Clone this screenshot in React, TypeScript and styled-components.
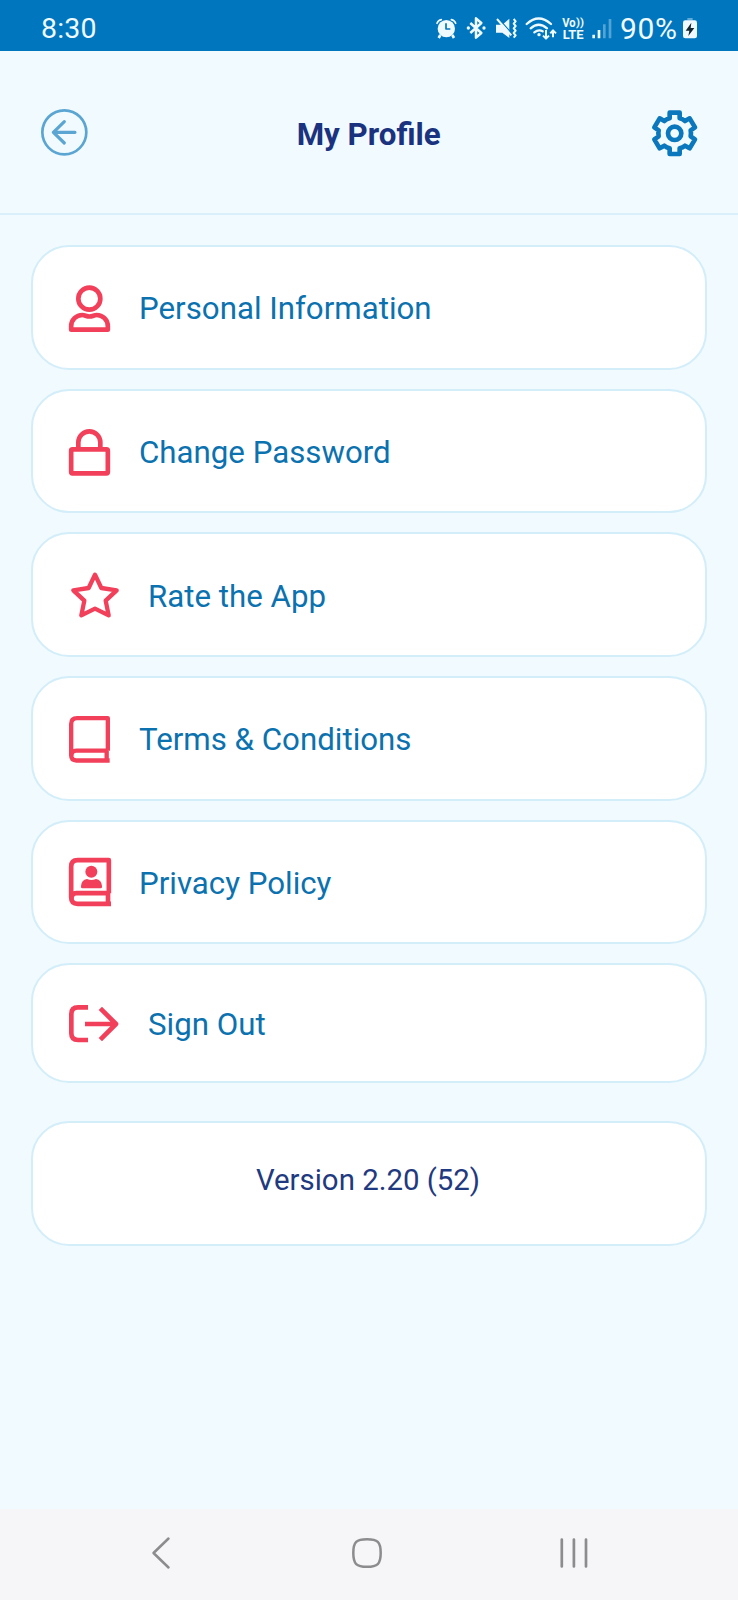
import React from "react";
import styled, { createGlobalStyle } from "styled-components";

const GlobalStyle = createGlobalStyle`
  * { box-sizing: border-box; }
  body { margin: 0; background: #f0faff; font-family: Roboto, "Liberation Sans", sans-serif; }
  svg { display: block; flex: none; overflow: visible; }
`;

const Screen = styled.div`
  width: 738px;
  height: 1600px;
  display: flex;
  flex-direction: column;
  background: #f0faff;
`;

const StatusBar = styled.div`
  height: 51px;
  flex: none;
  display: flex;
  align-items: center;
  justify-content: space-between;
  padding: 5px 41px 0 41px;
  background: #0076be;
  color: #effaff;
`;

const StatusText = styled.span`
  padding-top: 2px;
  font-size: 28.5px;
  line-height: 32px;
  letter-spacing: 0.2px;
`;

const StatusIcons = styled.div`
  display: flex;
  align-items: center;
  width: 263px;
`;

const BatteryLevel = styled(StatusText)`
  width: 67px;
  padding-left: 4px;
  font-size: 30px;
  letter-spacing: 0.6px;
`;

const Header = styled.header`
  height: 164px;
  flex: none;
  display: flex;
  align-items: center;
  justify-content: space-between;
  padding: 2px 41px 0 41px;
  border-bottom: 2px solid #d9eff9;
`;

const Title = styled.h1`
  margin: 0;
  padding: 3px 2px 0 0;
  font-size: 31.3px;
  line-height: 40px;
  font-weight: 700;
  color: #1b327f;
`;

const IconButton = styled.button`
  padding: 0;
  border: 0;
  background: none;
`;

const BackButton = styled(IconButton)`
  padding-bottom: 1px;
`;

const Content = styled.main`
  flex: 1;
  padding: 30px 31px 0;
`;

const Menu = styled.nav`
  display: flex;
  flex-direction: column;
  gap: 19.2px;
`;

const Card = styled.div<{ $height: number }>`
  height: ${(p) => p.$height}px;
  display: flex;
  align-items: center;
  border: 2px solid #d3edf9;
  border-radius: 38px;
  background: #fff;
`;

const MenuRow = styled(Card)`
  padding-left: 36px;
  color: #0b72af;
`;

const IconSlot = styled.span<{ $wide?: boolean; $drop: number }>`
  width: ${(p) => (p.$wide ? 50 : 41)}px;
  margin-right: 29px;
  padding-top: ${(p) => p.$drop}px;
  display: flex;
  justify-content: ${(p) => (p.$wide ? "flex-end" : "flex-start")};
  color: #f2405b;
`;

const Label = styled.span`
  padding-top: 4px;
  font-size: 31.25px;
  line-height: 36px;
  white-space: nowrap;
`;

const VersionCard = styled(Card)`
  margin-top: 38px;
  padding: 0 2px 7px 0;
  justify-content: center;
  color: #1f3a80;
  font-size: 29.4px;
`;

const NavBar = styled.footer`
  height: 91px;
  flex: none;
  display: flex;
  align-items: center;
  justify-content: space-between;
  padding: 0 150px 3px;
  background: #f6f6f8;
`;

type GlyphProps = { w: number; h: number; stroke?: number; children: React.ReactNode };

/* Glyphs are drawn on a grid of three units to a pixel. */
const Glyph = ({ w, h, stroke = 14, children }: GlyphProps) => (
  <svg
    width={w / 3}
    height={h / 3}
    viewBox={`0 0 ${w} ${h}`}
    fill="none"
    stroke="currentColor"
    strokeWidth={stroke}
    strokeLinejoin="round"
  >
    {children}
  </svg>
);

const PersonIcon = () => (
  <Glyph w={123} h={141}>
    <circle cx="61" cy="41" r="33" />
    <path d="M6.5 134V124C6.500 104 22 90 40 90C48 90 52 94.500 61.500 94.500C71 94.500 75 90 83 90C101 90 116.500 104 116.500 124V134Z" />
  </Glyph>
);

const LockIcon = () => (
  <Glyph w={123} h={141}>
    <rect x="6.500" y="61" width="110" height="72" rx="4" />
    <path d="M28 60V40a33 33 0 0 1 66 0V60" />
  </Glyph>
);

const StarIcon = () => (
  <Glyph w={144} h={138} stroke={13}>
    <path d="M72 8L91 48L137 55L104 86L113 130L72 110L31 130L40 86L7 55L53 48Z" />
  </Glyph>
);

const BookIcon = () => (
  <Glyph w={123} h={140} stroke={13}>
    <path d="M116.500 104V6.500H24Q6.500 6.500 6.500 24V118Q6.500 133.500 22 133.500H122" />
    <path d="M7 119Q7 104 22 104H116.500M113 104V134" />
  </Glyph>
);

const PrivacyIcon = () => (
  <Glyph w={126} h={144}>
    <path d="M119.500 105.500V6.500H26Q6.500 6.500 6.500 26V118Q6.500 137.500 26 137.500H126" />
    <path d="M7 124Q7 105.500 22 105.500H119.500M117 105V137" />
    <g fill="currentColor" stroke="none">
      <circle cx="67" cy="41" r="18" />
      <path d="M36 87V84Q37 66 54 63Q61 66 67.500 66Q74 66 81 63Q98 66 99 84V87Q99 91 95 91H40Q36 91 36 87Z" />
    </g>
  </Glyph>
);

const SignOutIcon = () => (
  <Glyph w={150} h={112}>
    <path d="M57 7H27Q7 7 7 27V85Q7 105 27 105H57M48 57H142M94 10L141 57L94 104" />
  </Glyph>
);

const BackIcon = () => (
  <Glyph w={140} h={140} stroke={8}>
    <g stroke="#5aa5d2" strokeLinecap="round">
      <circle cx="70" cy="70" r="66" />
      <path d="M102 70H37M70 38L37 70L70 102" strokeWidth="9.500" />
    </g>
  </Glyph>
);

const GearIcon = () => (
  <Glyph w={136} h={140} stroke={14}>
    <g stroke="#0b78bd">
      <path d="M53 8H83V25Q92 27 99 33L113 25L129 52L116 61Q118 70 116 79L129 88L113 115L99 107Q92 113 83 115V132H53V115Q44 113 37 107L23 115L7 88L20 79Q18 70 20 61L7 52L23 25L37 33Q44 27 53 25Z" />
      <circle cx="68" cy="70" r="20" />
    </g>
  </Glyph>
);

const AlarmIcon = () => (
  <Glyph w={78} h={72} stroke={5}>
    <circle cx="37" cy="38" r="26" fill="currentColor" stroke="none" />
    <path d="M19 57L14 66M55 57L60 66" strokeWidth="8" />
    <path d="M9 22Q12 13 22 11M52 11Q62 13 65 22" strokeLinecap="round" />
    <path d="M36 22V39H49" stroke="#0076be" />
  </Glyph>
);

const BluetoothIcon = () => (
  <Glyph w={90} h={72} stroke={7.5}>
    <path d="M31 21L64 51L48 65V7L64 21L31 51" />
    <circle cx="25" cy="36" r="5" fill="currentColor" stroke="none" />
    <circle cx="72" cy="36" r="5" fill="currentColor" stroke="none" />
  </Glyph>
);

const MuteIcon = () => (
  <Glyph w={90} h={72} stroke={6}>
    <path d="M18 26H37L58 8V66L37 50H18Z" fill="currentColor" stroke="none" />
    <path d="M26 8L66 53" stroke="#0076be" strokeWidth="4" />
    <path d="M21 9L64 58" strokeWidth="6" />
    <path d="M71 9L77 16L71 23L77 30L71 37L77 44L71 51L77 58L71 65" />
  </Glyph>
);

const WifiIcon = () => (
  <Glyph w={117} h={72} stroke={7}>
    <path d="M20 24Q56 -9 93 24M32 37Q56 16 81 37M43 49Q56 39 68 46" strokeLinecap="round" />
    <circle cx="57" cy="56" r="5" fill="currentColor" stroke="none" />
    <path d="M78 42V67M69 59L78 68L87 59M99 64V43M91 52L99 43L108 52" strokeWidth="6" />
  </Glyph>
);

const VolteIcon = () => (
  <Glyph w={87} h={72}>
    <g fill="currentColor" stroke="none" fontFamily="Roboto, sans-serif" fontWeight="700">
      <text x="10" y="34" fontSize="36" textLength="40" lengthAdjust="spacingAndGlyphs">Vo</text>
      <text x="51" y="31" fontSize="30" textLength="24" lengthAdjust="spacingAndGlyphs">))</text>
      <text x="11" y="70" fontSize="38" textLength="63" lengthAdjust="spacingAndGlyphs">LTE</text>
    </g>
  </Glyph>
);

const SignalIcon = () => (
  <Glyph w={84} h={72} stroke={8}>
    <path d="M17 56V67M33 42V67" />
    <path d="M49 25V67M66 9V67" opacity="0.35" />
  </Glyph>
);

const BatteryIcon = () => (
  <Glyph w={42} h={66}>
    <path d="M13 3H29V10H13Z" fill="currentColor" stroke="none" opacity="0.4" />
    <rect y="10" width="42" height="54" rx="7" fill="currentColor" stroke="none" />
    <path d="M25 17L8 41H19L16 57L34 33H23Z" fill="#12262f" stroke="none" />
  </Glyph>
);

const items = [
  { label: "Personal Information", icon: <PersonIcon />, drop: 3 },
  { label: "Change Password", icon: <LockIcon />, drop: 3 },
  { label: "Rate the App", icon: <StarIcon />, wide: true },
  { label: "Terms & Conditions", icon: <BookIcon />, drop: 2 },
  { label: "Privacy Policy", icon: <PrivacyIcon /> },
  { label: "Sign Out", icon: <SignOutIcon />, wide: true, height: 119.5 },
];

export default function App() {
  return (
    <Screen>
      <GlobalStyle />
      <StatusBar>
        <StatusText>8:30</StatusText>
        <StatusIcons>
          <AlarmIcon />
          <BluetoothIcon />
          <MuteIcon />
          <WifiIcon />
          <VolteIcon />
          <SignalIcon />
          <BatteryLevel>90%</BatteryLevel>
          <BatteryIcon />
        </StatusIcons>
      </StatusBar>
      <Header>
        <BackButton aria-label="Back"><BackIcon /></BackButton>
        <Title>My Profile</Title>
        <IconButton aria-label="Settings"><GearIcon /></IconButton>
      </Header>
      <Content>
        <Menu>
          {items.map(({ label, icon, wide, drop = 0, height = 124.5 }) => (
            <MenuRow key={label} $height={height}>
              <IconSlot $wide={wide} $drop={drop}>{icon}</IconSlot>
              <Label>{label}</Label>
            </MenuRow>
          ))}
        </Menu>
        <VersionCard $height={125.5}>Version 2.20 (52)</VersionCard>
      </Content>
      <NavBar>
        <svg width="24" height="32" fill="none" stroke="#8c8c8e" strokeWidth="2.500" strokeLinecap="round" strokeLinejoin="round">
          <path d="M18.500 1.500L3.500 16L18.500 30.500" />
        </svg>
        <svg width="30" height="32" fill="none" stroke="#8c8c8e" strokeWidth="2.500">
          <path d="M15 2.200C25.500 2.200 28.700 5 28.700 16C28.700 27 25.500 29.800 15 29.800C4.500 29.800 1.300 27 1.300 16C1.300 5 4.500 2.200 15 2.200Z" />
        </svg>
        <svg width="28" height="32" fill="none" stroke="#8c8c8e" strokeWidth="2.700" strokeLinecap="round">
          <path d="M1.800 2.500V29.500M13.900 2.500V29.500M26 2.500V29.500" />
        </svg>
      </NavBar>
    </Screen>
  );
}
